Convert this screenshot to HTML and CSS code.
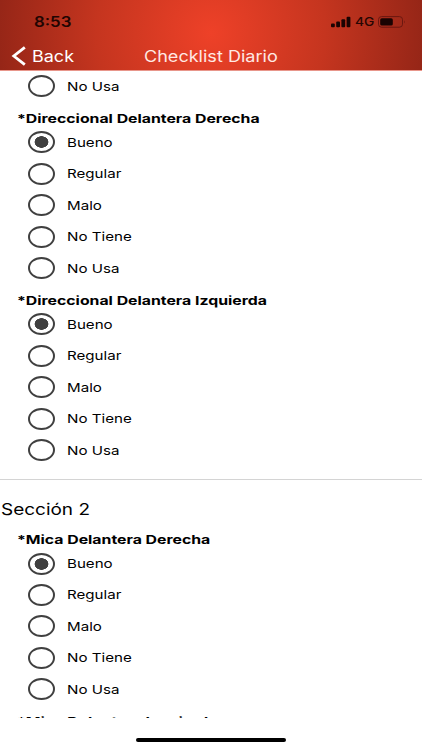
FILE: index.html
```html
<!DOCTYPE html>
<html lang="es">
<head>
<meta charset="utf-8">
<title>Checklist Diario</title>
<link rel="stylesheet" href="styles.css">
</head>
<body>
<header class="top">
  <div class="status">
    <span class="time wide">8:53</span>
    <div class="indicators">
      <svg class="signal" width="20" height="12" viewBox="0 0 20 12"><rect x="0" y="7.5" width="3.8" height="3.8" rx="1"/><rect x="5.2" y="5.5" width="3.8" height="5.8" rx="1"/><rect x="10.4" y="3.2" width="3.8" height="8.1" rx="1"/><rect x="15.6" y=".8" width="3.8" height="10.5" rx="1"/></svg>
      <span class="network wide">4G</span>
      <svg class="battery" width="28" height="12" viewBox="0 0 28 12"><rect x=".5" y=".6" width="24" height="10.6" rx="3" fill="none" stroke="#6b1710"/><rect x="2.2" y="2.3" width="12.6" height="7.3" rx="1.6"/><path d="M26 4.2q1.5 1.7 0 3.4z" fill="#6b1710"/></svg>
    </div>
  </div>
  <nav class="bar">
    <a class="back"><svg width="15" height="20" viewBox="0 0 15 20"><path d="M13.8 1.3 2.8 10l11 8.7" fill="none" stroke="#fff" stroke-width="2.8"/></svg><span class="back-text wide">Back</span></a>
    <h1 class="title wide">Checklist Diario</h1>
  </nav>
</header>
<main class="content">
  <div class="option"><i class="radio"></i><span class="label wide">No Usa</span></div>
  <section class="group">
    <h3 class="question"><span class="wide">*Direccional Delantera Derecha</span></h3>
    <div class="option"><i class="radio on"></i><span class="label wide">Bueno</span></div>
    <div class="option"><i class="radio"></i><span class="label wide">Regular</span></div>
    <div class="option"><i class="radio"></i><span class="label wide">Malo</span></div>
    <div class="option"><i class="radio"></i><span class="label wide">No Tiene</span></div>
    <div class="option"><i class="radio"></i><span class="label wide">No Usa</span></div>
  </section>
  <section class="group">
    <h3 class="question"><span class="wide">*Direccional Delantera Izquierda</span></h3>
    <div class="option"><i class="radio on"></i><span class="label wide">Bueno</span></div>
    <div class="option"><i class="radio"></i><span class="label wide">Regular</span></div>
    <div class="option"><i class="radio"></i><span class="label wide">Malo</span></div>
    <div class="option"><i class="radio"></i><span class="label wide">No Tiene</span></div>
    <div class="option"><i class="radio"></i><span class="label wide">No Usa</span></div>
  </section>
  <h2 class="section-title"><span class="wide">Sección 2</span></h2>
  <section class="group">
    <h3 class="question"><span class="wide">*Mica Delantera Derecha</span></h3>
    <div class="option"><i class="radio on"></i><span class="label wide">Bueno</span></div>
    <div class="option"><i class="radio"></i><span class="label wide">Regular</span></div>
    <div class="option"><i class="radio"></i><span class="label wide">Malo</span></div>
    <div class="option"><i class="radio"></i><span class="label wide">No Tiene</span></div>
    <div class="option"><i class="radio"></i><span class="label wide">No Usa</span></div>
  </section>
  <h3 class="question last"><span class="wide">*Mica Delantera Izquierda</span></h3>
</main>
<footer class="home"><div class="home-bar"></div></footer>
</body>
</html>
```
FILE: styles.css
```css
* { box-sizing: border-box; }
body {
  margin: 0;
  width: 422px;
  height: 750px;
  overflow: hidden;
  display: flex;
  flex-direction: column;
  background: #fff;
  color: #000;
  font-family: Inter, "Liberation Sans", sans-serif;
}
h1, h2, h3 { margin: 0; font-weight: 400; }
.wide {
  display: inline-block;
  white-space: nowrap;
  transform: scaleX(1.2);
  transform-origin: 0 50%;
}
.top {
  flex: none;
  height: 71px;
  border-bottom: 1px solid #e8968b;
  background: radial-gradient(circle 238px at 211px 33px, #ee4128 0%, #c5351f 48%, #8a2215 100%);
}
.status {
  height: 42px;
  display: flex;
  justify-content: space-between;
  padding: 0 16px 0 34px;
}
.time { font-size: 14px; font-weight: 600; line-height: 43px; color: #210502; }
.indicators { display: flex; align-items: center; height: 43px; fill: #190302; }
.network { width: 23px; margin-left: 4px; font-size: 11.5px; font-weight: 500; color: #270603; }
.bar { height: 28px; display: flex; align-items: center; color: #fff; }
.back { width: 144px; padding-left: 11px; display: flex; align-items: center; }
.back-text { margin-left: 6px; font-size: 15.5px; transform: scaleX(1.16); }
.title { font-size: 15.5px; color: #ffe9e4; transform: scaleX(1.165); }
.content { flex: none; height: 648px; margin-top: -0.6px; overflow: hidden; }
.option {
  height: 31.4px;
  padding-left: 28.3px;
  display: flex;
  align-items: center;
}
.radio {
  width: 27.2px;
  height: 22px;
  border: 2px solid #404040;
  border-radius: 50%;
}
.radio.on { background: radial-gradient(ellipse 7.2px 6px at center, #404040 92%, transparent 100%); }
.label { margin-left: 11.3px; font-size: 12px; transform: translateY(-0.2px) scaleX(1.26); }
.question {
  height: 25px;
  padding: 9px 0 0 17.2px;
  font-size: 12.4px;
  line-height: 16px;
}
.question .wide { font-weight: 650; transform: translateY(0.2px) scaleX(1.276); }
.question.last { padding-top: 9px; }
.question.last .wide { transform: translateY(-0.4px) scaleX(1.276); }
.section-title {
  height: 44px;
  margin-top: 13.2px;
  border-top: 1px solid #d4d4d4;
  padding-left: 1px;
  font-size: 16px;
  line-height: 58px;
}
.section-title .wide { transform: scaleX(1.185); }
.home { flex: 1; display: flex; justify-content: center; padding-top: 19.2px; }
.home-bar { width: 150px; height: 4.5px; border-radius: 3px; background: #000; }
```
